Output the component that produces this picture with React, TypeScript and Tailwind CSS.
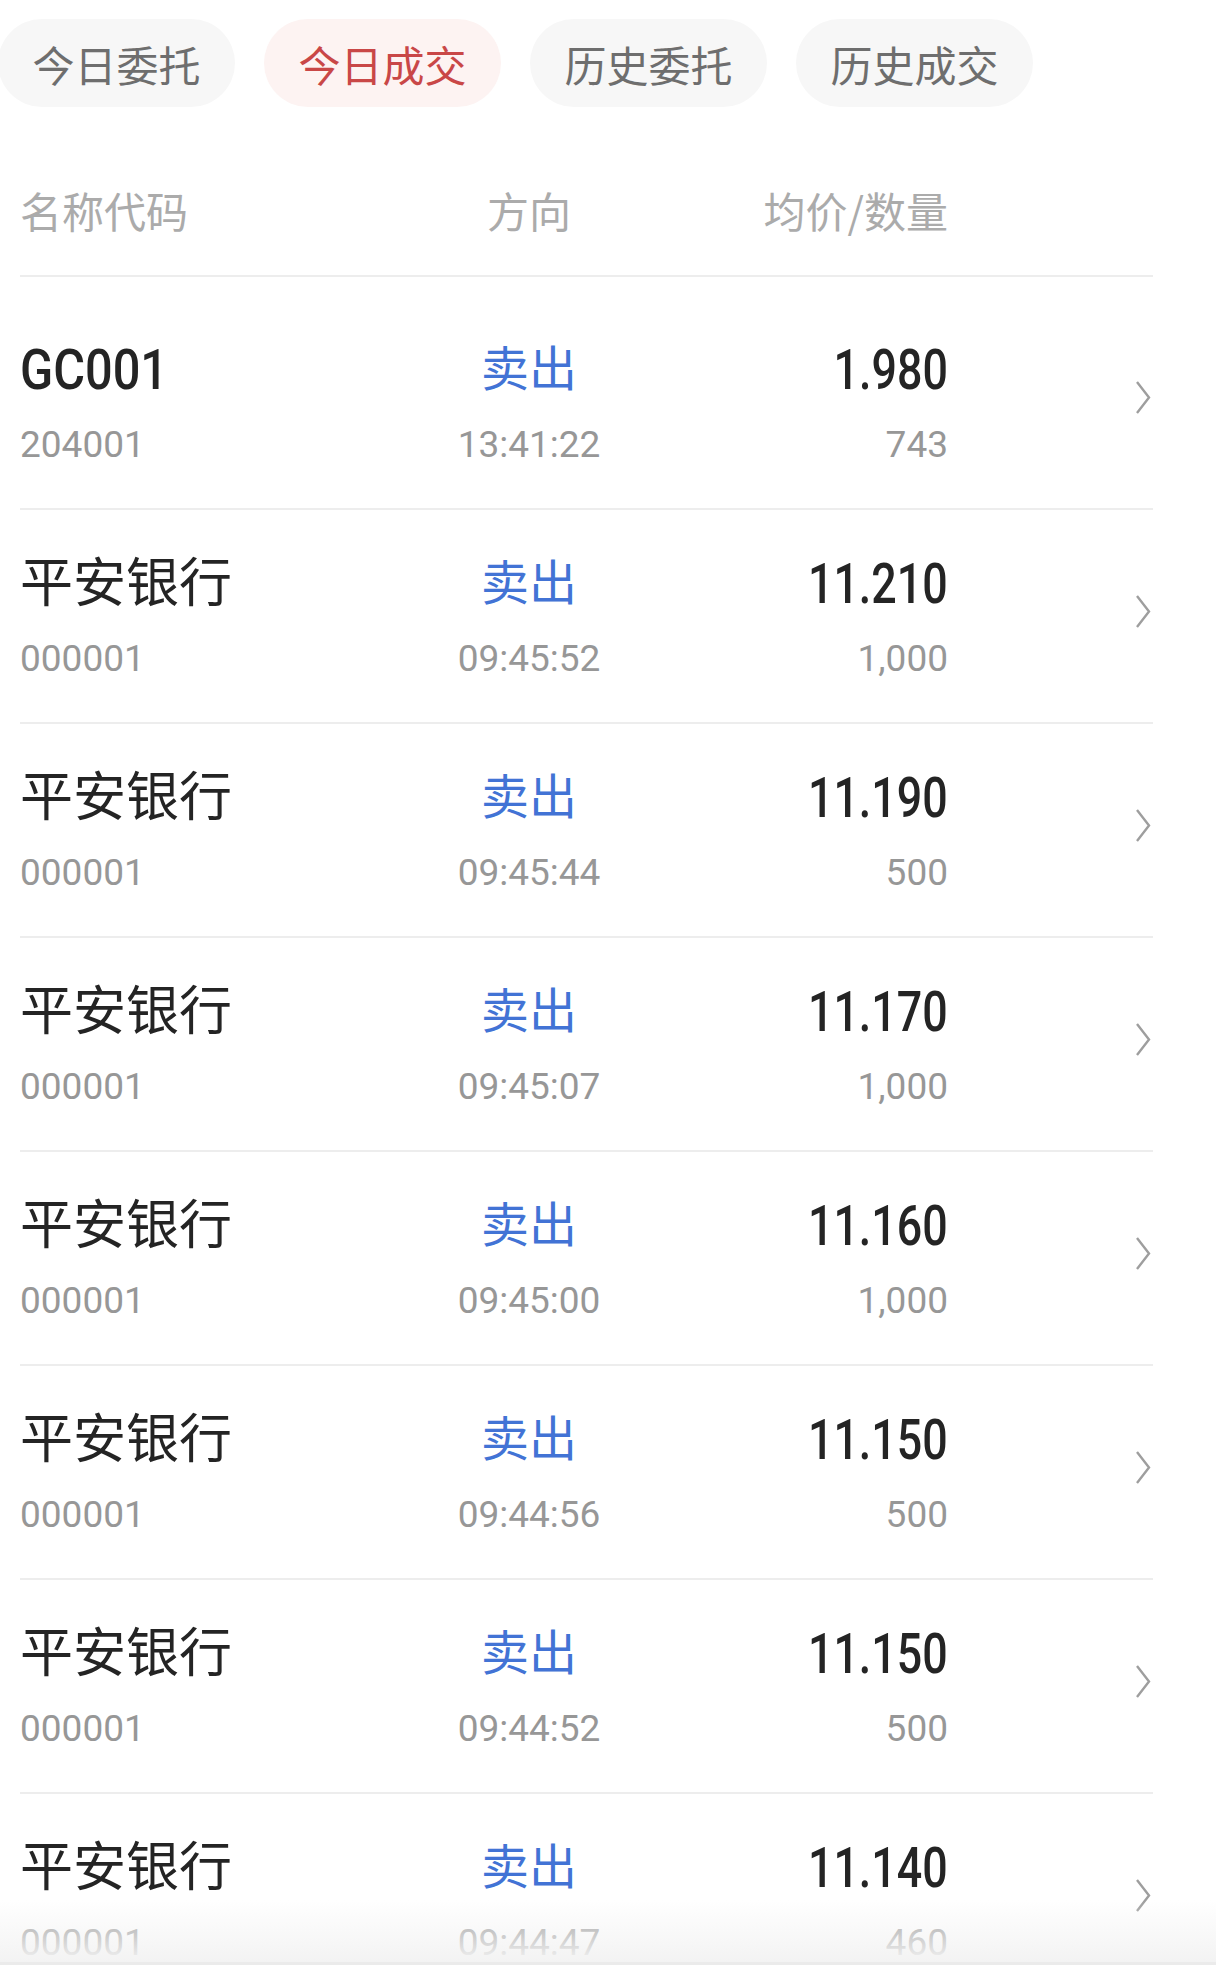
const tabs = [
  { label: '今日委托', active: false },
  { label: '今日成交', active: true },
  { label: '历史委托', active: false },
  { label: '历史成交', active: false },
];

const trades = [
  { name: 'GC001', code: '204001', side: '卖出', time: '13:41:22', price: '1.980', qty: '743' },
  { name: '平安银行', code: '000001', side: '卖出', time: '09:45:52', price: '11.210', qty: '1,000' },
  { name: '平安银行', code: '000001', side: '卖出', time: '09:45:44', price: '11.190', qty: '500' },
  { name: '平安银行', code: '000001', side: '卖出', time: '09:45:07', price: '11.170', qty: '1,000' },
  { name: '平安银行', code: '000001', side: '卖出', time: '09:45:00', price: '11.160', qty: '1,000' },
  { name: '平安银行', code: '000001', side: '卖出', time: '09:44:56', price: '11.150', qty: '500' },
  { name: '平安银行', code: '000001', side: '卖出', time: '09:44:52', price: '11.150', qty: '500' },
  { name: '平安银行', code: '000001', side: '卖出', time: '09:44:47', price: '11.140', qty: '460' },
];

const cjk = "font-['Noto_Sans_CJK_SC',sans-serif]";
const digits = "font-['Roboto',sans-serif]";

function Chevron() {
  return (
    <svg width="16" height="33" viewBox="0 0 16 33" fill="none" className="mb-[7px]">
      <polyline points="2,1 14,16.5 2,32" stroke="#9e9e9e" strokeWidth="2.4" strokeLinejoin="miter" />
    </svg>
  );
}

function TradeRow({ t, first }: { t: (typeof trades)[number]; first: boolean }) {
  const isLatin = /^[A-Z0-9]+$/.test(t.name);
  return (
    <div className={`flex items-center border-b-2 border-[#ededed] pb-[41px] ${first ? 'pt-[58px]' : 'pt-[39px]'}`}>
      {/* name / code */}
      <div className="w-[369px] flex flex-col items-start">
        {isLatin ? (
          <span className={`inline-block h-[60px] leading-[60px] text-[56px] font-medium text-[#242424] origin-left scale-x-[0.87] translate-y-[5px] ${digits}`}>
            {t.name}
          </span>
        ) : (
          <span className={`h-[60px] leading-[60px] text-[53px] text-[#242424] ${cjk}`}>{t.name}</span>
        )}
        <span className={`mt-[28px] h-[44px] leading-[44px] text-[37px] text-[#979797] ${digits}`}>{t.code}</span>
      </div>

      {/* side / time */}
      <div className="w-[280px] flex flex-col items-center">
        <span className={`h-[60px] leading-[60px] text-[48px] text-[#4273d5] ${cjk}`}>{t.side}</span>
        <span className={`mt-[28px] h-[44px] leading-[44px] text-[37px] text-[#979797] ${digits}`}>{t.time}</span>
      </div>

      {/* price / qty */}
      <div className="w-[279px] flex flex-col items-end">
        <span className={`inline-block h-[60px] leading-[60px] text-[56px] font-medium text-[#242424] origin-right scale-x-[0.8] translate-y-[5px] ${digits}`}>
          {t.price}
        </span>
        <span className={`mt-[28px] h-[44px] leading-[44px] text-[37px] text-[#979797] ${digits}`}>{t.qty}</span>
      </div>

      <div className="flex-1 flex justify-end pr-[2px]">
        <Chevron />
      </div>
    </div>
  );
}

export default function App() {
  return (
    <div className="relative w-[1216px] h-[1984px] overflow-hidden bg-white">
      {/* Tabs */}
      <div className="flex gap-[29px] pt-[19px] ml-[-2px]">
        {tabs.map((tab) => (
          <div
            key={tab.label}
            className={`w-[237px] h-[88px] rounded-full flex items-center justify-center text-[42px] ${cjk} ${
              tab.active ? 'bg-[#fdf3f2] text-[#c94747]' : 'bg-[#f7f7f7] text-[#6e6e6e]'
            }`}
          >
            {tab.label}
          </div>
        ))}
      </div>

      <div className="px-[20px] w-[1173px]">
        {/* Header */}
        <div className={`flex border-b-2 border-[#ededed] pt-[82px] pb-[44px] text-[42px] leading-[42px] text-[#ababab] ${cjk}`}>
          <span className="w-[369px]">名称代码</span>
          <span className="w-[280px] text-center">方向</span>
          <span className="w-[279px] text-right">均价/数量</span>
        </div>

        {/* Rows */}
        <div className="flex flex-col">
          {trades.map((t, i) => (
            <TradeRow key={i} t={t} first={i === 0} />
          ))}
        </div>
      </div>

      {/* bottom fade + bar */}
      <div className="absolute left-0 right-0 bottom-0 flex flex-col">
        <div className="h-[62px] bg-gradient-to-b from-white/0 to-[#f3f3f3]" />
        <div className="h-[3px] bg-[#ebebeb]" />
        <div className="h-[19px] bg-white" />
      </div>
    </div>
  );
}
